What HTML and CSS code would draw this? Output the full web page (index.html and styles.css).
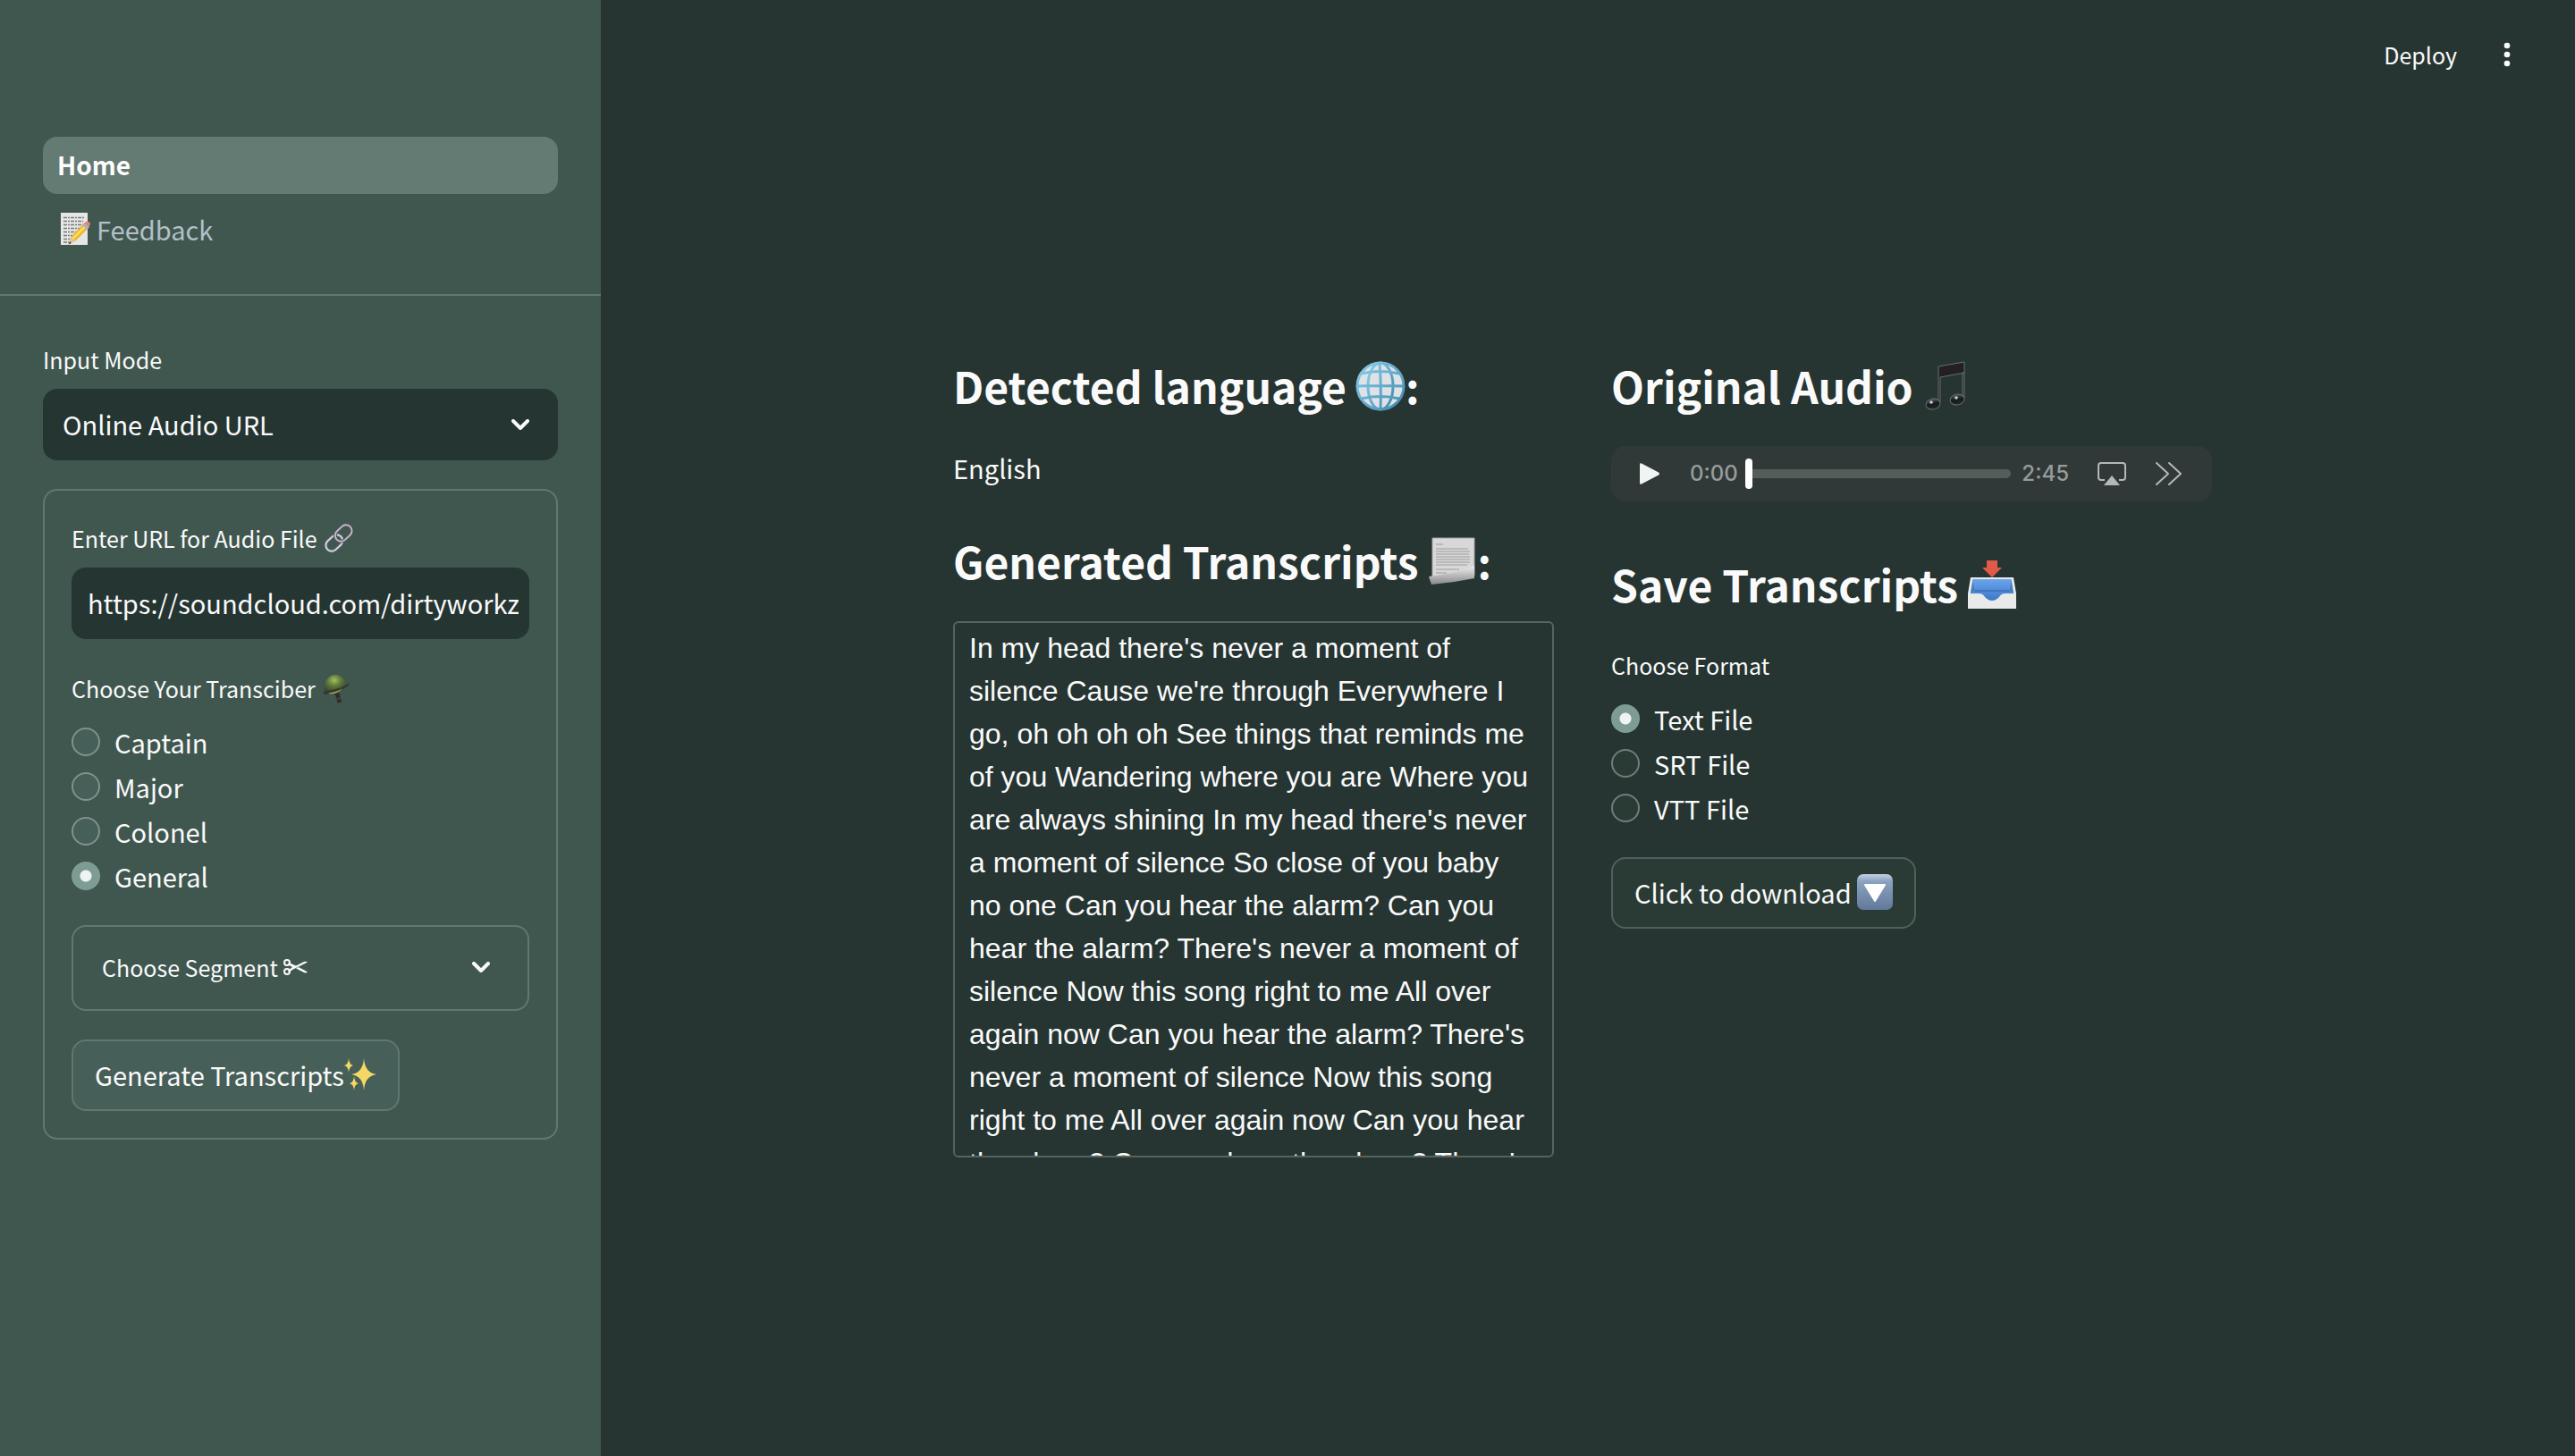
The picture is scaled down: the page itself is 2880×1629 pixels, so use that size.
FILE: index.html
```html
<!DOCTYPE html>
<html lang="en">
<head>
<meta charset="utf-8">
<meta name="viewport" content="width=device-width, initial-scale=1">
<title>Home</title>
<link rel="stylesheet" href="styles.css">
</head>
<body>
<div class="app">
  <aside class="sidebar">
    <nav class="nav">
      <a class="nav-link active" href="#home">Home</a>
      <a class="nav-link" href="#feedback">
        <svg class="emoji memo" viewBox="0 0 36 36" aria-hidden="true"><path fill="#e6e6e4" d="M2 0h30v36H2z"/><g stroke="#77797b" stroke-width="1.3" stroke-dasharray="4 1 2 1"><path d="M5 5.500h24M5 9.500h22M5 13.500h24M5 17.500h18M5 21.500h14M5 25.500h10M5 29.500h7M5 33h6"/></g><path fill="#edb92e" d="M13 27 28 12l5 5-15 15z"/><path fill="#ffe070" d="m14.500 28.500 15-15 1.500 1.500-15 15z"/><path fill="#d9c39b" d="m13 27 5 5-7 3z"/><path fill="#444" d="m12 32 2 2-3.500 1.500z"/><path fill="#aeb4b8" d="m26 14 3-3 5 5-3 3z"/><path fill="#e8837f" d="m28 12 2-2q3-1 5 2 0 2-2 4z"/></svg>
        <span>Feedback</span>
      </a>
    </nav>
    <div class="controls">
      <div class="field">
        <label class="label" for="mode">Input Mode</label>
        <div class="select-wrap">
          <select class="control" id="mode"><option>Online Audio URL</option><option>Upload Audio File</option></select>
          <svg class="chevron" viewBox="0 0 20 12" aria-hidden="true"><path d="m2 2 8 8 8-8"/></svg>
        </div>
      </div>
      <form class="card">
        <div class="field">
          <label class="label" for="url">Enter URL for Audio File
            <svg class="emoji link" viewBox="0 0 36 36" aria-hidden="true"><g fill="none" transform="rotate(-43 18 18)"><rect x="-1" y="11.500" width="22" height="14" rx="7" stroke="#59616a" stroke-width="4"/><rect x="-1" y="11.500" width="22" height="14" rx="7" stroke="#d3dae2" stroke-width="2"/><rect x="15" y="10.500" width="22" height="14" rx="7" stroke="#555057" stroke-width="4"/><rect x="15" y="10.500" width="22" height="14" rx="7" stroke="#bdbdc6" stroke-width="2"/></g></svg>
          </label>
          <input class="control" id="url" type="text" value="https://soundcloud.com/dirtyworkz">
        </div>
        <fieldset class="radios">
          <legend class="label">Choose Your Transciber
            <svg class="emoji helmet" viewBox="0 0 36 36" aria-hidden="true"><defs><radialGradient id="dome" cx=".45" cy=".3" r=".65"><stop offset="0" stop-color="#a5c05f"/><stop offset=".45" stop-color="#607d3b"/><stop offset="1" stop-color="#394631"/></radialGradient></defs><path fill="url(#dome)" d="M3 21Q3 4 14 2q10-1 15 11Q24 21 4 24z"/><path fill="#38362d" d="M2 22Q20 20 33 12q-2 5-12 9Q10 26 2 25z"/><path fill="#91a54b" d="M7 24q12-2 18-6-6 6-14 7z"/><path fill="none" stroke="#302c29" stroke-width="5" stroke-dasharray="6 1" d="m18 24 3 11"/></svg>
          </legend>
          <div class="options">
            <label class="option"><input type="radio" name="rank">Captain</label>
            <label class="option"><input type="radio" name="rank">Major</label>
            <label class="option"><input type="radio" name="rank">Colonel</label>
            <label class="option"><input type="radio" name="rank" checked>General</label>
          </div>
        </fieldset>
        <details class="expander">
          <summary>
            <span class="summary-text">Choose Segment
              <svg class="scissors" viewBox="0 0 27 18" aria-hidden="true"><g fill="none" stroke="#fafafa" stroke-width="2"><ellipse cx="4" cy="4" rx="3" ry="3"/><ellipse cx="4" cy="14" rx="3" ry="3"/></g><path fill="#fafafa" d="m6 4 8 3.500L23 3q2-.8 4 .5L10 12l-4 3-1-2 5-4-5-3zM14 10.500l3-1.500 10 5.500q-2 1.500-4 .5z"/></svg>
            </span>
            <svg class="chevron" viewBox="0 0 20 12" aria-hidden="true"><path d="m2 2 8 8 8-8"/></svg>
          </summary>
        </details>
        <button class="button" type="button">Generate Transcripts<svg class="emoji sparkles" viewBox="0 0 36 36" aria-hidden="true"><path fill="#f5d863" d="M22 0q1 16 14 18-13 2-14 18Q21 20 8 18 21 16 22 0zM5 0q.5 7 5 8-4.500 1-5 8-.5-7-5-8 4.500-1 5-8zM11 20q.5 7 5 8-4.500 1-5 8-.5-7-5-8 4.500-1 5-8z"/></svg></button>
      </form>
    </div>
  </aside>
  <main class="main">
    <header class="topbar">
      <button class="plain deploy" type="button">Deploy</button>
      <button class="plain" type="button" aria-label="Menu"><svg class="dots" viewBox="0 0 24 32"><circle cx="12" cy="6" r="3.300"/><circle cx="12" cy="16" r="3.300"/><circle cx="12" cy="26" r="3.300"/></svg></button>
    </header>
    <div class="columns">
      <section class="column">
        <h3>Detected language <svg class="emoji big" viewBox="0 0 56 56" aria-hidden="true"><defs><linearGradient id="sea" x2="1" y2="1"><stop stop-color="#8ad0ed"/><stop offset="1" stop-color="#3f88ae"/></linearGradient></defs><circle cx="28" cy="28" r="26" fill="#dfe2e5"/><g fill="none" stroke="url(#sea)" stroke-width="3"><circle cx="28" cy="28" r="26"/><ellipse cx="28" cy="28" rx="14" ry="26"/><path d="M7 14q21-5 42 0M7 42q21-5 42 0M27 2q2 26 1 52M2 28q26-1 52 0"/></g></svg>:</h3>
        <p class="language">English</p>
        <h3 id="transcripts">Generated Transcripts <svg class="emoji big" viewBox="0 0 56 56" aria-hidden="true"><defs><linearGradient id="roll" x2="0" y2="1"><stop stop-color="#eee"/><stop offset="1" stop-color="#888"/></linearGradient></defs><path fill="#d8d8d8" stroke="#a5a5a5" d="M5 2h47v42L5 49z"/><path stroke="#b0b0b0" stroke-width="1.500" d="M9 9h8M9 14h36M9 17h38M9 20h37M9 23h38M9 26h38M9 29h38M9 32h35M9 37h26M9 41h12"/><path fill="url(#roll)" d="M1 45Q28 42 52 33v14Q28 52 4 54z"/></svg>:</h3>
        <textarea class="transcript" aria-labelledby="transcripts">In my head there's never a moment of silence Cause we're through Everywhere I go, oh oh oh oh See things that reminds me of you Wandering where you are Where you are always shining In my head there's never a moment of silence So close of you baby no one Can you hear the alarm? Can you hear the alarm? There's never a moment of silence Now this song right to me All over again now Can you hear the alarm? There's never a moment of silence Now this song right to me All over again now Can you hear the alarm? Can you hear the alarm? There's never a moment of silence</textarea>
      </section>
      <section class="column">
        <h3>Original Audio <svg class="emoji big" viewBox="0 0 56 56" aria-hidden="true"><defs><linearGradient id="note" x2="0" y2="1"><stop stop-color="#515b60"/><stop offset=".5" stop-color="#15191b"/><stop offset="1" stop-color="#25292b"/></linearGradient></defs><path fill="#241f21" stroke="#66716f" d="M18 6 47 1v12l-27 5v28h-2z"/><path fill="#232a2c" stroke="#66716f" d="M45 13h2v28h-2z"/><ellipse cx="12" cy="48" rx="8" ry="6" fill="url(#note)" stroke="#66716f" transform="rotate(-12 12 48)"/><ellipse cx="39" cy="43" rx="8" ry="6" fill="url(#note)" stroke="#66716f" transform="rotate(-12 39 43)"/><circle cx="10" cy="46" r="1.800" fill="#ccd"/><circle cx="38" cy="41" r="1.800" fill="#ccd"/></svg></h3>
        <div class="player">
          <button class="plain" type="button" aria-label="Play"><svg class="play" viewBox="0 0 22 24"><path d="M0 1.500Q0-.5 2 .5l19 10q2 1.500 0 3l-19 10q-2 1-2-1z"/></svg></button>
          <span class="time">0:00</span>
          <input class="seek" type="range" min="0" max="165" value="0" aria-label="Position">
          <span class="time">2:45</span>
          <button class="plain airplay" type="button" aria-label="AirPlay"><svg viewBox="0 0 32 26"><path fill="none" stroke="#b3b9b7" stroke-width="2" d="M8 20H4q-3 0-3-3V4q0-3 3-3h24q3 0 3 3v13q0 3-3 3h-4"/><path fill="#b3b9b7" d="m16 15 9 11H7z"/></svg></button>
          <button class="plain more" type="button" aria-label="More"><svg viewBox="0 0 30 26"><path fill="none" stroke="#b3b9b7" stroke-width="2" stroke-linecap="round" stroke-linejoin="round" d="m2 1 13 12L2 25M16 1l13 12-13 12"/></svg></button>
        </div>
        <h3>Save Transcripts <svg class="emoji big" viewBox="0 0 56 56" aria-hidden="true"><defs><linearGradient id="tray" x2="0" y2="1"><stop stop-color="#69a4ec"/><stop offset="1" stop-color="#3f78c6"/></linearGradient></defs><path fill="#e05a47" d="M22 1h12v8h5L28 20 17 9h5z"/><path fill="#e9ebea" d="M4 20h48l3 18v17H1V38z"/><path fill="url(#tray)" d="M6.500 22h43L52 38h-9q-5 0-7 4-8 8-16 0-2-4-7-4H4z"/><path fill="#346bad" opacity=".6" d="M6.500 22 8 34l-4 4zM49.500 22 48 34l4 4zM8 34h40v2H8z"/></svg></h3>
        <fieldset class="radios format">
          <legend class="label">Choose Format</legend>
          <div class="options">
            <label class="option"><input type="radio" name="format" checked>Text File</label>
            <label class="option"><input type="radio" name="format">SRT File</label>
            <label class="option"><input type="radio" name="format">VTT File</label>
          </div>
        </fieldset>
        <button class="button" type="button">Click to download <svg class="emoji down" viewBox="0 0 40 40" aria-hidden="true"><defs><linearGradient id="key" x2="0" y2="1"><stop stop-color="#c3d3e4"/><stop offset=".2" stop-color="#8aa3bf"/><stop offset="1" stop-color="#62789a"/></linearGradient></defs><rect width="40" height="40" rx="7" fill="url(#key)"/><path fill="#fff" stroke="#fff" stroke-width="2" stroke-linejoin="round" d="M9 12h22L20 30z"/></svg></button>
      </section>
    </div>
  </main>
</div>
</body>
</html>
```
FILE: styles.css
```css
* { box-sizing: border-box; }

body {
  margin: 0;
  background: #263532;
  color: #fafafa;
  font: 29px/48px "Noto Sans CJK SC", "Noto Sans", sans-serif;
}

button, input, select { font: inherit; color: inherit; }

.app { display: flex; min-height: 100vh; }

.sidebar { flex: 0 0 672px; background: #405750; }

.nav {
  display: flex;
  flex-direction: column;
  gap: 8px;
  padding: 153px 48px 40px;
  border-bottom: 2px solid #60786f;
}

.nav-link {
  display: flex;
  align-items: center;
  gap: 6px;
  height: 64px;
  padding: 0 16px 2px;
  border-radius: 16px;
  color: #b3c0c7;
  text-decoration: none;
}

.nav-link.active { background: #647b73; color: #fff; font-size: 28px; font-weight: 700; }
.memo { margin-left: 2px; }

.controls { display: flex; flex-direction: column; gap: 32px; padding: 48px; }

.card {
  display: flex;
  flex-direction: column;
  align-items: stretch;
  gap: 32px;
  padding: 30px;
  border: 2px solid #60786f;
  border-radius: 16px;
}

.field { display: flex; flex-direction: column; gap: 12px; }

.label {
  display: flex;
  align-items: center;
  gap: 7px;
  height: 44px;
  padding: 2px 0 0;
  font-size: 25px;
}

.select-wrap { display: grid; align-items: center; }
.select-wrap > * { grid-area: 1 / 1; }
.select-wrap .chevron { justify-self: end; margin-right: 32px; pointer-events: none; }

.control {
  width: 100%;
  height: 80px;
  padding: 0 12px 2px 18px;
  border: 0;
  border-radius: 16px;
  background: #253532;
  appearance: none;
}

select.control { padding: 0 22px 2px; }

.chevron { width: 20px; height: 12px; fill: none; stroke: #fafafa; stroke-width: 4; stroke-linecap: round; stroke-linejoin: round; }

.radios { min-width: 0; margin: 0; padding: 0; border: 0; }
.format { padding-top: 2px; }

.options { display: flex; flex-direction: column; gap: 4px; margin-top: 16px; }
.format .options { margin-top: 14px; }

.option { display: flex; align-items: center; gap: 16px; height: 46px; }

.option input {
  width: 32px;
  height: 32px;
  margin: 0;
  border: 2px solid #7f928b;
  border-radius: 50%;
  background: #465f58;
  appearance: none;
}

.format .option input { border-color: #717d79; background: #2a3b36; }

.option input:checked, .format .option input:checked {
  border: 0;
  background: radial-gradient(circle, #f0f2f6 6px, #7d9d94 7px);
}

.expander { border: 2px solid #60786f; border-radius: 16px; }

.expander summary {
  display: flex;
  align-items: center;
  justify-content: space-between;
  height: 92px;
  padding: 0 42px 2px 32px;
  font-size: 25px;
  list-style: none;
}

.summary-text { display: flex; align-items: center; gap: 6px; }
.scissors { width: 27px; height: 18px; }

.button {
  display: flex;
  align-items: center;
  align-self: flex-start;
  gap: 6px;
  height: 80px;
  padding: 0 24px 2px;
  border: 2px solid #60786f;
  border-radius: 16px;
  background: #465f58;
}

.card .button { gap: 0; }
.column .button { margin-top: 32px; border-color: #51605b; background: #2a3b36; }

.emoji { flex: none; width: 36px; height: 36px; }
.link, .helmet { width: 34px; height: 34px; overflow: visible; }
.down { width: 40px; height: 40px; }
.big { width: 56px; height: 56px; }

.main { flex: 1; min-width: 0; padding-right: 12px; }

.topbar {
  display: flex;
  align-items: center;
  justify-content: flex-end;
  gap: 44px;
  height: 122px;
  padding-right: 52px;
}

.plain { display: flex; padding: 0; border: 0; background: none; }
.deploy { font-size: 25px; }
.dots { width: 24px; height: 32px; fill: #fafafa; }

.columns {
  display: grid;
  grid-template-columns: 1fr 1fr;
  gap: 64px;
  max-width: 1408px;
  margin: 0 auto;
  padding: 275px 0 64px;
}

.column { min-width: 0; }

h3 {
  display: flex;
  align-items: center;
  gap: 10px;
  height: 68px;
  margin: 46px 0 34px;
  font-size: 48px;
  font-weight: 600;
  white-space: nowrap;
}

h3:first-child { margin-top: 0; }
h3 .big { margin: 2px -10px 0 0; }

.language { margin: 0; }

.transcript {
  display: block;
  width: 100%;
  height: 600px;
  padding: 4px 16px;
  border: 2px solid #56635f;
  border-radius: 6px;
  background: none;
  color: inherit;
  font: 32px/48px "Liberation Sans", Arial, sans-serif;
  resize: none;
  scrollbar-width: none;
}

.player {
  display: flex;
  align-items: center;
  height: 62px;
  margin-bottom: 58px;
  padding: 0 34px 0 32px;
  border-radius: 16px;
  background: #303938;
}

.play { width: 22px; height: 24px; margin-right: 34px; fill: #f0f5f3; }

.time { color: #979c9b; font: 500 24px/48px Inter, sans-serif; }

.seek {
  flex: 1;
  min-width: 0;
  height: 34px;
  margin: 0 12px 0 8px;
  background: none;
  appearance: none;
}

.seek::-webkit-slider-runnable-track { height: 10px; border-radius: 5px; background: #555d5b; }
.seek::-webkit-slider-thumb { width: 8px; height: 34px; margin-top: -12px; border-radius: 4px; background: #fff; appearance: none; }

.airplay { margin: 0 32px; }
.airplay svg { width: 32px; height: 26px; }
.more svg { width: 30px; height: 26px; }
```
